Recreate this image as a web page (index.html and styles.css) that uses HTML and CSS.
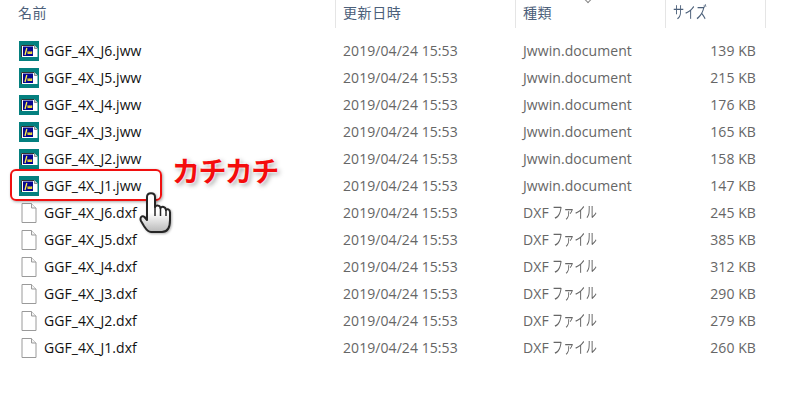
FILE: index.html
```html
<!DOCTYPE html>
<html lang="ja">
<head>
<meta charset="utf-8">
<title>Files</title>
<link rel="stylesheet" href="styles.css">
</head>
<body>
<svg width="0" height="0" class="defs">
  <symbol id="jww" viewBox="0 0 20 20">
    <rect width="20" height="20" fill="#04807f"/>
    <path d="M2 4.500H15.500L18.500 7.500V16H2Z" fill="#fff"/>
    <path d="M15.500 4.500V7.500H18.500" fill="#ccc" stroke="#555" stroke-width=".6"/>
    <path d="M2.500 4.500H15M2.500 4.500V16" fill="none" stroke="#333" stroke-width="1"/>
    <rect x="4" y="5.500" width="10" height="9.500" fill="#06068f"/>
    <path d="M6 14L7.800 7" stroke="#fff04a" stroke-width="1.300" fill="none"/>
    <path d="M8.500 11.600H13.200" stroke="#ffe92e" stroke-width="2.600" fill="none"/>
    <path d="M9.900 10.300V11.300M11.800 10.300V11.300" stroke="#06068f" stroke-width=".8"/>
  </symbol>
  <symbol id="dxf" viewBox="0 0 16 20">
    <path d="M1 .5H10.500L15 5V19.500H1Z" fill="#fff" stroke="#9a9a9a"/>
    <path d="M10.500 .5V5H15" fill="#f2f2f2" stroke="#9a9a9a"/>
  </symbol>
</svg>
<main class="explorer">
  <header class="head">
    <div class="hcell name">名前</div>
    <div class="hcell date">更新日時</div>
    <div class="hcell type">種類<span class="chev"></span></div>
    <div class="hcell size"><span class="narrow">サイズ</span></div>
  </header>
  <div class="rows">
    <div class="row"><span class="nm"><svg class="ico"><use href="#jww"/></svg>GGF_4X_J6.jww</span><span class="dt">2019/04/24 15:53</span><span class="ty">Jwwin.document</span><span class="sz">139 KB</span></div>
    <div class="row"><span class="nm"><svg class="ico"><use href="#jww"/></svg>GGF_4X_J5.jww</span><span class="dt">2019/04/24 15:53</span><span class="ty">Jwwin.document</span><span class="sz">215 KB</span></div>
    <div class="row"><span class="nm"><svg class="ico"><use href="#jww"/></svg>GGF_4X_J4.jww</span><span class="dt">2019/04/24 15:53</span><span class="ty">Jwwin.document</span><span class="sz">176 KB</span></div>
    <div class="row"><span class="nm"><svg class="ico"><use href="#jww"/></svg>GGF_4X_J3.jww</span><span class="dt">2019/04/24 15:53</span><span class="ty">Jwwin.document</span><span class="sz">165 KB</span></div>
    <div class="row"><span class="nm"><svg class="ico"><use href="#jww"/></svg>GGF_4X_J2.jww</span><span class="dt">2019/04/24 15:53</span><span class="ty">Jwwin.document</span><span class="sz">158 KB</span></div>
    <div class="row"><span class="nm"><svg class="ico"><use href="#jww"/></svg>GGF_4X_J1.jww</span><span class="dt">2019/04/24 15:53</span><span class="ty">Jwwin.document</span><span class="sz">147 KB</span></div>
    <div class="row"><span class="nm"><svg class="ico doc"><use href="#dxf"/></svg>GGF_4X_J6.dxf</span><span class="dt">2019/04/24 15:53</span><span class="ty">DXF <span class="narrow">ファイル</span></span><span class="sz">245 KB</span></div>
    <div class="row"><span class="nm"><svg class="ico doc"><use href="#dxf"/></svg>GGF_4X_J5.dxf</span><span class="dt">2019/04/24 15:53</span><span class="ty">DXF <span class="narrow">ファイル</span></span><span class="sz">385 KB</span></div>
    <div class="row"><span class="nm"><svg class="ico doc"><use href="#dxf"/></svg>GGF_4X_J4.dxf</span><span class="dt">2019/04/24 15:53</span><span class="ty">DXF <span class="narrow">ファイル</span></span><span class="sz">312 KB</span></div>
    <div class="row"><span class="nm"><svg class="ico doc"><use href="#dxf"/></svg>GGF_4X_J3.dxf</span><span class="dt">2019/04/24 15:53</span><span class="ty">DXF <span class="narrow">ファイル</span></span><span class="sz">290 KB</span></div>
    <div class="row"><span class="nm"><svg class="ico doc"><use href="#dxf"/></svg>GGF_4X_J2.dxf</span><span class="dt">2019/04/24 15:53</span><span class="ty">DXF <span class="narrow">ファイル</span></span><span class="sz">279 KB</span></div>
    <div class="row"><span class="nm"><svg class="ico doc"><use href="#dxf"/></svg>GGF_4X_J1.dxf</span><span class="dt">2019/04/24 15:53</span><span class="ty">DXF <span class="narrow">ファイル</span></span><span class="sz">260 KB</span></div>
  </div>
  <div class="callout"></div>
  <div class="label">カチカチ</div>
  <svg class="hand" viewBox="0 0 33 43" width="33" height="43">
    <defs><linearGradient id="hg" x1="0" y1="0" x2="0" y2="1"><stop offset=".5" stop-color="#fff"/><stop offset="1" stop-color="#b8b8b8"/></linearGradient></defs>
    <path d="M8 5C8 0 16 0 16 5V15C17 13 21 13 21.500 16C23 14 26.500 14.500 27 18C28 16.500 31 17 31 20.500V28C31 34 29 40 23 40H12C8.500 40 7 37 5 34L2 29C.5 25.500 3 23 5.500 25L8 28Z" fill="url(#hg)" stroke="#262626" stroke-width="2" stroke-linejoin="round"/>
    <path d="M16 15V24M21.500 16V24M27 18V24" stroke="#262626" stroke-width="1.500" fill="none"/>
  </svg>
</main>
</body>
</html>
```
FILE: styles.css
```css
html, body { margin: 0; padding: 0; background: #fff; }
.defs { position: absolute; }
.explorer {
  position: relative;
  width: 789px;
  height: 401px;
  overflow: hidden;
  font-family: "Open Sans", "Noto Sans CJK JP", sans-serif;
  font-size: 14px;
}
.head {
  display: grid;
  grid-template-columns: 336px 180px 150px 100px;
  height: 28px;
  color: #4c607a;
}
.hcell {
  position: relative;
  padding-left: 7px;
  line-height: 25px;
  border-right: 1px solid #e5e5e5;
  font-family: "Noto Sans CJK JP", sans-serif;
  font-size: 14px;
  letter-spacing: .6px;
}
.hcell.name { padding-left: 18px; }
.chev {
  position: absolute;
  left: 69px;
  top: -4px;
  width: 5px;
  height: 5px;
  border-right: 1px solid #888;
  border-bottom: 1px solid #888;
  transform: rotate(45deg);
}
.narrow {
  display: inline-block;
  line-height: 1;
  font-family: "Noto Sans CJK JP", sans-serif;
  font-size: 15.500px;
  transform: scaleX(.72);
  transform-origin: left center;
}
.rows { padding-top: 9px; }
.row {
  display: grid;
  grid-template-columns: 336px 180px 150px 90px;
  height: 27px;
  line-height: 27px;
  color: #666;
  white-space: nowrap;
  letter-spacing: .07px;
}
.nm {
  display: flex;
  align-items: center;
  padding-left: 19px;
  color: #111;
}
.ico { width: 20px; height: 20px; margin-right: 5px; flex: none; }
.doc { width: 16px; margin-left: 2px; margin-right: 7px; }
.dt, .ty { padding-left: 7px; }
.sz { text-align: right; }
.callout {
  position: absolute;
  left: 10px;
  top: 169px;
  width: 148px;
  height: 28px;
  border: 2px solid #f01010;
  border-radius: 6px;
  box-shadow: 1px 1px 3px rgba(0,0,0,.35);
}
.label {
  position: absolute;
  left: 172px;
  top: 150px;
  font-family: "Noto Sans CJK JP", sans-serif;
  font-size: 28px;
  line-height: 40px;
  font-weight: 700;
  color: #f40c0c;
  letter-spacing: -1.600px;
  text-shadow: 0 0 2px #fff, 0 0 3px #fff, 2px 2px 5px rgba(0,0,0,.4);
}
.hand {
  position: absolute;
  left: 139px;
  top: 192px;
  filter: drop-shadow(1px 1px 1px rgba(0,0,0,.3));
}
```
